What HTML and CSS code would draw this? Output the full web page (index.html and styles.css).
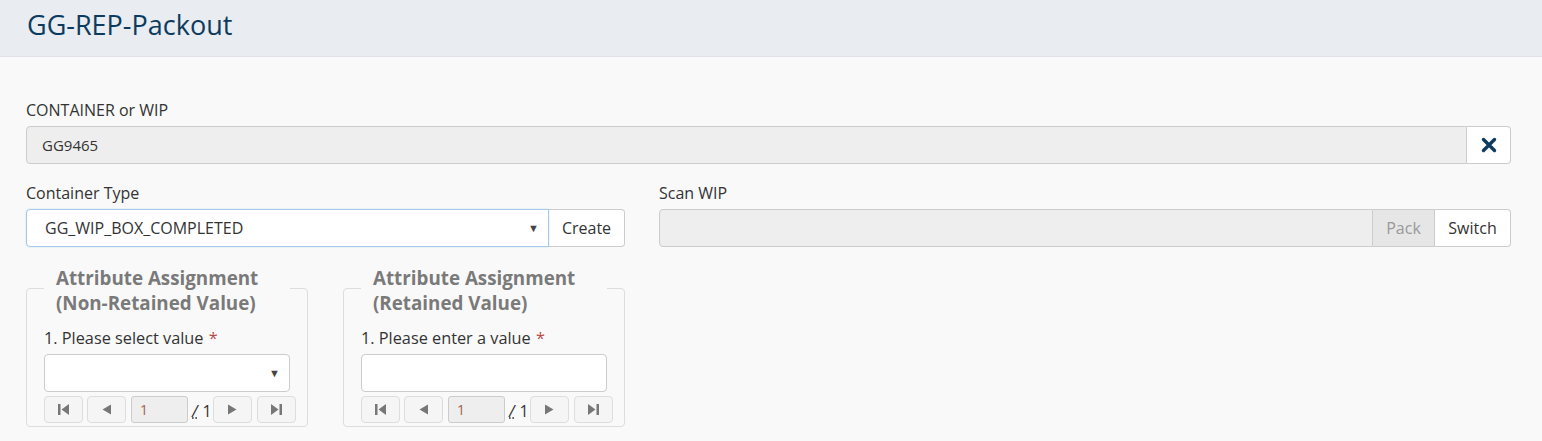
FILE: index.html
```html
<!DOCTYPE html>
<html>
<head>
<meta charset="utf-8">
<link rel="stylesheet" href="styles.css">
</head>
<body>
<header class="topbar"><h1 class="title">GG-REP-Packout</h1></header>
<main class="content">
  <div class="field">
    <label class="lbl">CONTAINER or WIP</label>
    <div class="group">
      <div class="inp inp-disabled">GG9465</div>
      <button class="addon addon-x" aria-label="clear">
        <svg width="16" height="16" viewBox="0 0 16 16"><path d="M2.5 2.5 L13.5 13.5 M13.5 2.5 L2.5 13.5" stroke="#0d3b5e" stroke-width="3.4" stroke-linecap="round"/></svg>
      </button>
    </div>
  </div>
  <div class="row2">
    <div class="col-left">
      <label class="lbl">Container Type</label>
      <div class="group">
        <div class="inp sel sel-focus">GG_WIP_BOX_COMPLETED<span class="caret">▼</span></div>
        <button class="addon addon-btn">Create</button>
      </div>
    </div>
    <div class="col-right">
      <label class="lbl">Scan WIP</label>
      <div class="group">
        <div class="inp inp-disabled"></div>
        <button class="addon addon-dis">Pack</button>
        <button class="addon addon-btn">Switch</button>
      </div>
    </div>
  </div>
  <div class="sets">
    <fieldset class="fs">
      <legend class="lg">Attribute Assignment (Non-Retained Value)</legend>
      <label class="lbl lbl-in">1. Please select value <span class="req">*</span></label>
      <div class="inp sel box"><span class="caret">▼</span></div>
      <div class="pager">
        <span class="pb"><svg width="13" height="13" viewBox="0 0 13 13"><rect x="1" y="1" width="2.5" height="11" fill="#777"/><path d="M12 1 L12 12 L4.5 6.5 Z" fill="#777"/></svg></span>
        <span class="pb"><svg width="11" height="13" viewBox="0 0 11 13"><path d="M10 1.5 L10 11.5 L1.5 6.5 Z" fill="#777"/></svg></span>
        <span class="pinp">1</span>
        <span class="pof"><abbr class="slash">/</abbr>1</span>
        <span class="pb"><svg width="11" height="13" viewBox="0 0 11 13"><path d="M1 1.5 L1 11.5 L9.5 6.5 Z" fill="#777"/></svg></span>
        <span class="pb"><svg width="13" height="13" viewBox="0 0 13 13"><path d="M1 1 L1 12 L8.5 6.5 Z" fill="#777"/><rect x="9.5" y="1" width="2.5" height="11" fill="#777"/></svg></span>
      </div>
    </fieldset>
    <fieldset class="fs">
      <legend class="lg">Attribute Assignment (Retained Value)</legend>
      <label class="lbl lbl-in">1. Please enter a value <span class="req">*</span></label>
      <div class="inp box"></div>
      <div class="pager">
        <span class="pb"><svg width="13" height="13" viewBox="0 0 13 13"><rect x="1" y="1" width="2.5" height="11" fill="#777"/><path d="M12 1 L12 12 L4.5 6.5 Z" fill="#777"/></svg></span>
        <span class="pb"><svg width="11" height="13" viewBox="0 0 11 13"><path d="M10 1.5 L10 11.5 L1.5 6.5 Z" fill="#777"/></svg></span>
        <span class="pinp">1</span>
        <span class="pof"><abbr class="slash">/</abbr>1</span>
        <span class="pb"><svg width="11" height="13" viewBox="0 0 11 13"><path d="M1 1.5 L1 11.5 L9.5 6.5 Z" fill="#777"/></svg></span>
        <span class="pb"><svg width="13" height="13" viewBox="0 0 13 13"><path d="M1 1 L1 12 L8.5 6.5 Z" fill="#777"/><rect x="9.5" y="1" width="2.5" height="11" fill="#777"/></svg></span>
      </div>
    </fieldset>
  </div>
</main>
</body>
</html>
```
FILE: styles.css
```css
* { box-sizing: border-box; }
html, body { margin: 0; padding: 0; }
body {
  background: #f9f9f9;
  font-family: "Open Sans", "Liberation Sans", sans-serif;
  font-size: 16px;
  color: #333;
  width: 1542px;
  height: 441px;
  overflow: hidden;
}
.topbar {
  height: 57px;
  background: #e9ecf1;
  border-bottom: 1px solid #dfe2e7;
  padding-left: 27px;
}
.title {
  margin: 0;
  font-size: 27px;
  font-weight: 400;
  line-height: 50px;
  color: #0d3b5e;
}
.content {
  padding: 43px 31px 0 26px;
}
.lbl {
  display: block;
  line-height: 20px;
  margin-bottom: 6px;
  font-weight: 400;
  font-size: 16px;
}
.group {
  display: flex;
  height: 38px;
}
.inp {
  flex: 1;
  height: 38px;
  border: 1px solid #ccc;
  border-radius: 4px 0 0 4px;
  background: #fff;
  padding: 0 15px;
  line-height: 36px;
  font-size: 15px;
  position: relative;
}
.inp-disabled { background: #eee; }
.sel { padding-left: 18px; font-size: 16px; }
.sel-focus {
  border-color: #a9c9ea;
  box-shadow: 0 0 2px rgba(102,175,233,0.35);
}
.caret {
  position: absolute;
  right: 9px;
  top: 0;
  font-size: 11px;
  color: #444;
}
.addon {
  height: 38px;
  border: 1px solid #ccc;
  border-left: none;
  background: #fff;
  font-family: inherit;
  font-size: 16px;
  color: #333;
  padding: 0;
  margin: 0;
}
.addon:last-child { border-radius: 0 4px 4px 0; }
.addon-x {
  width: 44px;
  display: flex;
  align-items: center;
  justify-content: center;
}
.addon-btn { width: 77px; }
.group .addon-btn:last-child { width: 76px; }
.addon-dis {
  width: 62px;
  background: #e6e6e6;
  color: #999;
}
.field { margin-bottom: 19px; }
.row2 {
  display: flex;
  gap: 34px;
}
.col-left { width: 599px; }
.col-right { flex: 1; }
.sets {
  display: flex;
  gap: 35px;
  margin-top: 14px;
}
.fs {
  width: 282px;
  min-width: 0;
  margin: 0;
  border: 1px solid #ddd;
  border-radius: 4px;
  padding: 0 17px 3px;
}
.lg {
  width: 100%;
  padding: 5px 12px 0;
  font-size: 18.8px;
  font-weight: 700;
  line-height: 25px;
  color: #7a7a7a;
}
.lbl-in { margin-top: 12px; font-size: 16.3px; }
.req { color: #b94a48; margin-left: 1px; }
.box {
  border-radius: 4px;
  height: 38px;
  flex: none;
}
.pager {
  display: flex;
  align-items: center;
  height: 27px;
  margin-top: 4px;
  width: 252px;
}
.pb {
  flex: none;
  width: 39px;
  height: 27px;
  border: 1px solid #ddd;
  border-radius: 4px;
  background: #f5f5f5;
  display: flex;
  align-items: center;
  justify-content: center;
  margin-right: 5px;
}
.pb:first-child { margin-right: 4px; }
.pinp {
  flex: none;
  width: 57px;
  height: 27px;
  border: 1px solid #ccc;
  border-radius: 3px;
  background: #eee;
  color: #a0634d;
  padding-left: 8px;
  line-height: 25px;
  font-size: 14px;
}
.pof {
  flex: none;
  width: 25px;
  padding-left: 4px;
  font-size: 16px;
  line-height: 25px;
  margin-top: 4px;
}
.slash {
  font-style: italic;
  text-decoration: underline dotted;
  margin-right: 5px;
}
```
